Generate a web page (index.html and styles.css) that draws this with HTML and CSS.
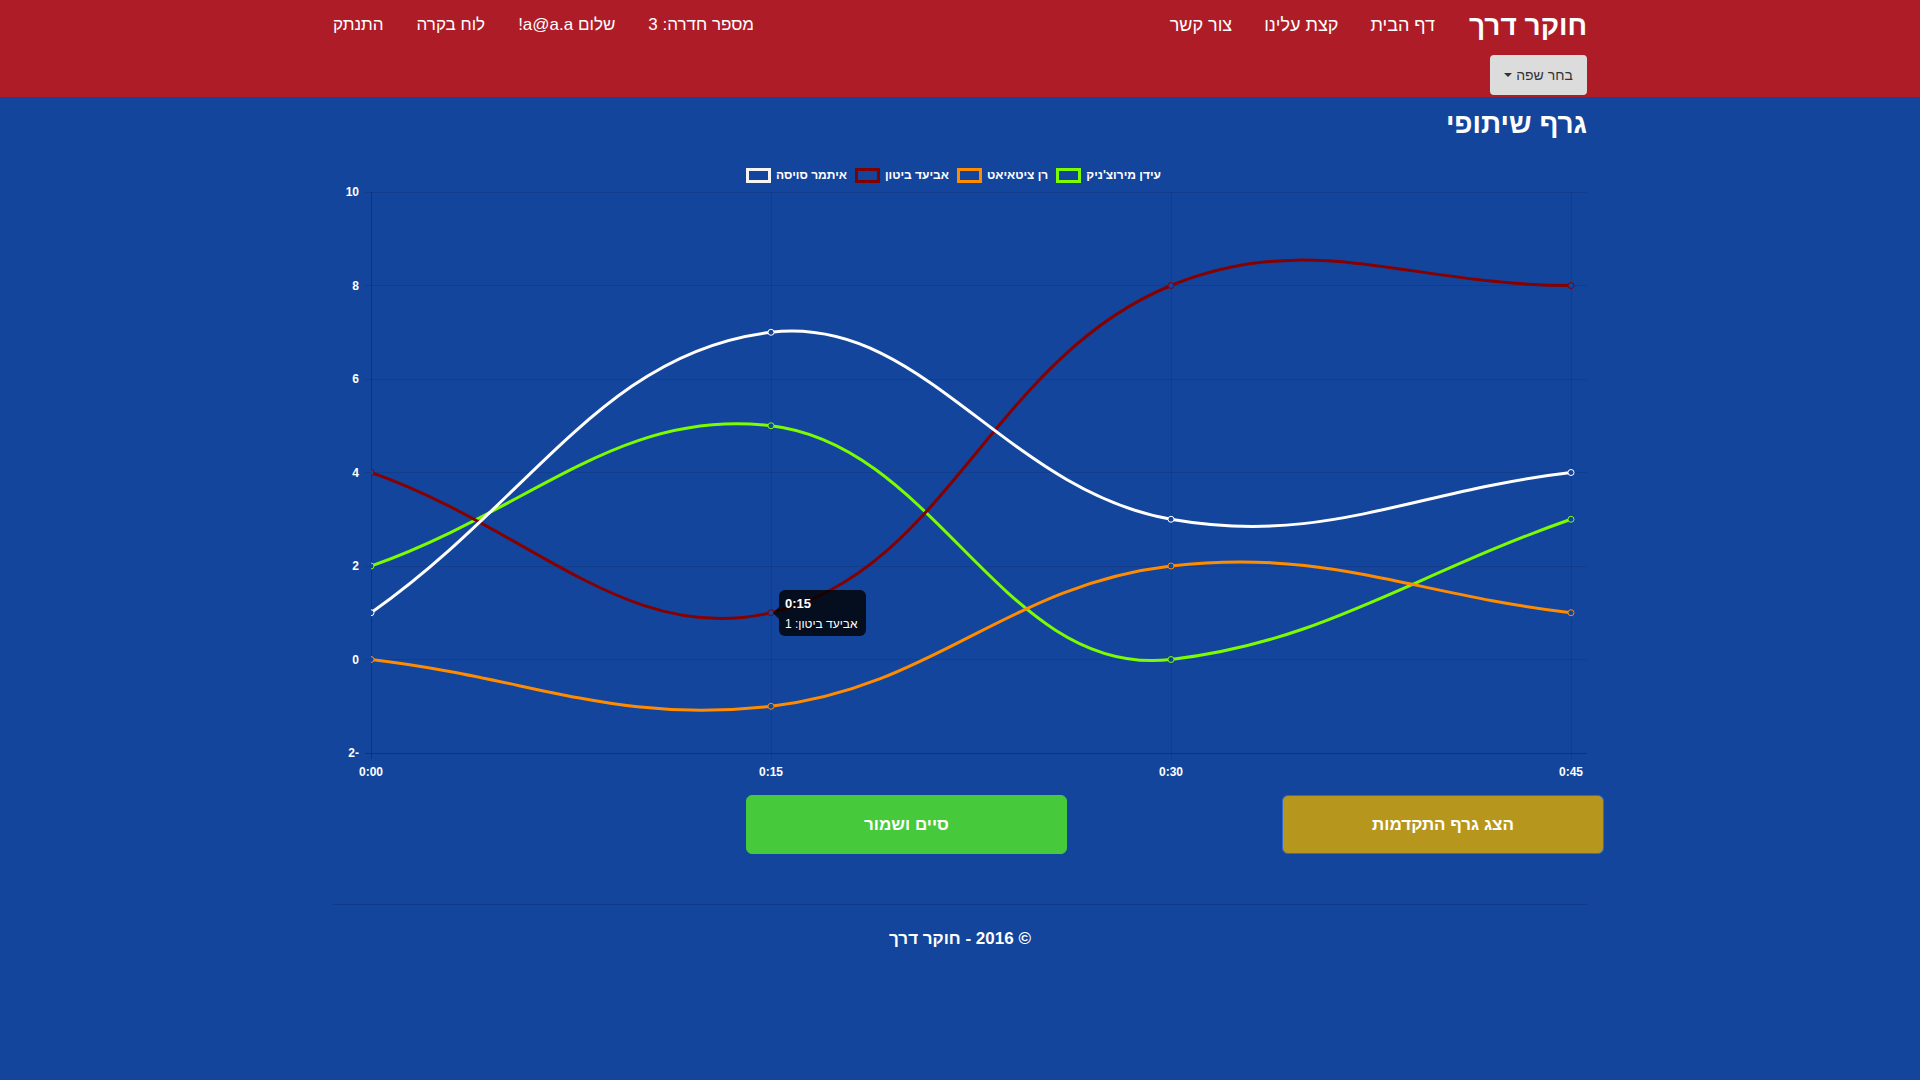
FILE: index.html
```html
<!DOCTYPE html>
<html lang="he" dir="rtl">
<head>
<meta charset="utf-8">
<title>גרף שיתופי</title>
<link rel="stylesheet" href="styles.css">
</head>
<body>
<header class="navbar">
  <div class="container">
    <div class="nav-top">
      <nav class="nav-main">
        <a class="brand">חוקר דרך</a>
        <a class="nav-link">דף הבית</a>
        <a class="nav-link">קצת עלינו</a>
        <a class="nav-link">צור קשר</a>
      </nav>
      <nav class="nav-user">
        <span class="nav-link">מספר חדרה: 3</span>
        <a class="nav-link">שלום a@a.a!</a>
        <a class="nav-link">לוח בקרה</a>
        <a class="nav-link">התנתק</a>
      </nav>
    </div>
    <div class="nav-bottom">
      <button class="lang-btn">בחר שפה <span class="caret"></span></button>
    </div>
  </div>
</header>

<main class="container">
  <h1 class="page-title">גרף שיתופי</h1>

  <div class="legend">
    <div class="legend-item"><span class="legend-box box-white"></span><span class="legend-text">איתמר סויסה</span></div>
    <div class="legend-item"><span class="legend-box box-red"></span><span class="legend-text">אביעד ביטון</span></div>
    <div class="legend-item"><span class="legend-box box-orange"></span><span class="legend-text">רן ציטאיאט</span></div>
    <div class="legend-item"><span class="legend-box box-green"></span><span class="legend-text">עידן מירוצ'ניק</span></div>
  </div>

  <div class="chart">
    <svg class="chart-svg" width="1254" height="600" viewBox="333 185 1254 600" xmlns="http://www.w3.org/2000/svg">
      <defs>
        <clipPath id="area"><rect x="371" y="150" width="1240" height="640"/></clipPath>
      </defs>
      <g class="grid">
        <line x1="365" y1="192.5" x2="1587" y2="192.5"/>
        <line x1="365" y1="285.5" x2="1587" y2="285.5"/>
        <line x1="365" y1="379.5" x2="1587" y2="379.5"/>
        <line x1="365" y1="472.5" x2="1587" y2="472.5"/>
        <line x1="365" y1="566.5" x2="1587" y2="566.5"/>
        <line x1="365" y1="659.5" x2="1587" y2="659.5"/>
        <line x1="771.5" y1="192" x2="771.5" y2="759"/>
        <line x1="1171.5" y1="192" x2="1171.5" y2="759"/>
        <line x1="1571.5" y1="192" x2="1571.5" y2="759"/>
      </g>
      <g class="axis">
        <line x1="371.5" y1="192" x2="371.5" y2="759"/>
        <line x1="365" y1="753.5" x2="1587" y2="753.5"/>
      </g>
      <g class="ticks-y">
        <text x="359" y="196">10</text>
        <text x="359" y="289.5">8</text>
        <text x="359" y="383">6</text>
        <text x="359" y="476.5">4</text>
        <text x="359" y="570">2</text>
        <text x="359" y="663.5">0</text>
        <text x="359" y="757">&#x200F;-2</text>
      </g>
      <g class="ticks-x">
        <text x="371" y="776">0:00</text>
        <text x="771" y="776">0:15</text>
        <text x="1171" y="776">0:30</text>
        <text x="1571" y="776">0:45</text>
      </g>
      <g clip-path="url(#area)" class="series">
        <path class="s-green" d="M371,566 C531,509.9 618.1,407.9 771,425.75 C938.1,445.3 1003.9,679 1171,659.5 C1323.9,641.6 1411,575.35 1571,519.25"/>
        <g class="pts pts-green"><circle cx="371" cy="566" r="3"/><circle cx="771" cy="425.75" r="3"/><circle cx="1171" cy="659.5" r="3"/><circle cx="1571" cy="519.25" r="3"/></g>
        <path class="s-orange" d="M371,659.5 C531,678.2 615.1,724.5 771,706.25 C935.1,687.05 1006.9,585.2 1171,566 C1326.9,547.8 1411,594.05 1571,612.75"/>
        <g class="pts pts-orange"><circle cx="371" cy="659.5" r="3"/><circle cx="771" cy="706.25" r="3"/><circle cx="1171" cy="566" r="3"/><circle cx="1571" cy="612.75" r="3"/></g>
        <path class="s-red" d="M371,472.5 C531,528.6 626.8,646.4 771,612.75 C946.8,571.65 990.6,359.3 1171,285.5 C1310.6,228.4 1411,285.5 1571,285.5"/>
        <g class="pts pts-red"><circle cx="371" cy="472.5" r="3"/><circle cx="771" cy="612.75" r="3"/><circle cx="1171" cy="285.5" r="3"/><circle cx="1571" cy="285.5" r="3"/></g>
        <path class="s-white" d="M371,612.75 C531,500.55 602.9,351.9 771,332.25 C922.9,314.5 1003.6,489.9 1171,519.25 C1323.6,546 1411,491.2 1571,472.5"/>
        <g class="pts pts-white"><circle cx="371" cy="612.75" r="3"/><circle cx="771" cy="332.25" r="3"/><circle cx="1171" cy="519.25" r="3"/><circle cx="1571" cy="472.5" r="3"/></g>
      </g>
      <polygon class="tip-caret" points="773,613 779,607 779,619"/>
    </svg>
    <div class="tooltip">
      <div class="tip-title">0:15</div>
      <div class="tip-body">אביעד ביטון: 1</div>
    </div>
  </div>

  <div class="actions">
    <button class="btn btn-gold">הצג גרף התקדמות</button>
    <button class="btn btn-green">סיים ושמור</button>
  </div>

  <hr class="divider">
  <footer class="footer">© 2016 - חוקר דרך</footer>
</main>
</body>
</html>
```
FILE: styles.css
```css
* { box-sizing: border-box; }

html, body {
  margin: 0;
  padding: 0;
}

body {
  background: #14459c;
  color: #fff;
  font-family: "Liberation Sans", Arial, "DejaVu Sans", sans-serif;
  min-height: 1080px;
}

.container {
  width: 1254px;
  margin: 0 auto;
}

/* Header */
.navbar {
  background: #ae1c28;
  height: 97px;
}

.nav-top {
  display: flex;
  justify-content: space-between;
  align-items: center;
  height: 50px;
}

.nav-main,
.nav-user {
  display: flex;
  align-items: center;
  gap: 33px;
}

.nav-main {
  gap: 32px;
}

.nav-main a,
.nav-user a,
.nav-user span {
  color: #fff;
  text-decoration: none;
}

.brand {
  font-size: 28px;
  font-weight: bold;
  padding-top: 2px;
  margin-left: 2px;
}

.nav-link {
  font-size: 17px;
}

.nav-main .nav-link {
  font-size: 18px;
}

.nav-bottom {
  display: flex;
  margin-top: 5px;
}

.lang-btn {
  width: 97px;
  height: 40px;
  background: #dcdcdc;
  border: 0;
  border-radius: 4px;
  color: #333;
  font-family: inherit;
  font-size: 14px;
  padding: 0;
  display: flex;
  align-items: center;
  justify-content: center;
  gap: 4px;
}

.caret {
  display: inline-block;
  width: 0;
  height: 0;
  border-top: 4px solid #333;
  border-left: 4px solid transparent;
  border-right: 4px solid transparent;
}

/* Title */
.page-title {
  margin: 11px 0 0;
  font-size: 28px;
  line-height: 32px;
  font-weight: bold;
}

/* Legend */
.legend {
  direction: ltr;
  display: flex;
  justify-content: center;
  gap: 8px;
  margin-top: 27px;
  height: 16px;
  padding-right: 13px;
}

.legend-item {
  display: flex;
  align-items: center;
  gap: 5px;
}

.legend-box {
  width: 25px;
  height: 15px;
  border: 3px solid #fff;
  background: #14459c;
}

.box-white { border-color: #f4f4f4; }
.box-red { border-color: #7e0000; }
.box-orange { border-color: #ff8c00; }
.box-green { border-color: #7cfc00; }

.legend-text {
  direction: rtl;
  font-size: 12px;
  font-weight: bold;
  color: #fff;
}

/* Chart */
.chart {
  position: relative;
  width: 1254px;
  height: 600px;
  margin-top: 2px;
}

.chart-svg {
  display: block;
  direction: ltr;
}

.grid line {
  stroke: rgba(0, 0, 0, 0.1);
  stroke-width: 1;
}

.axis line {
  stroke: rgba(0, 0, 0, 0.25);
  stroke-width: 1;
}

.ticks-y text {
  fill: #fff;
  font-family: "Liberation Sans", Arial, sans-serif;
  font-size: 12px;
  font-weight: bold;
  text-anchor: end;
}

.ticks-x text {
  fill: #fff;
  font-family: "Liberation Sans", Arial, sans-serif;
  font-size: 12px;
  font-weight: bold;
  text-anchor: middle;
}

.series path {
  fill: none;
  stroke-width: 3;
}

.s-white { stroke: #fff; }
.s-red { stroke: #850000; }
.s-orange { stroke: #ff8c00; }
.s-green { stroke: #7cfc00; }

.pts circle {
  fill: #14459c;
  stroke-width: 1;
}

.pts-white circle { stroke: #fff; }
.pts-red circle { stroke: #850000; }
.pts-orange circle { stroke: #ff8c00; }
.pts-green circle { stroke: #7cfc00; }

.tip-caret {
  fill: rgba(0, 0, 0, 0.8);
}

.tooltip {
  position: absolute;
  left: 446px;
  top: 405px;
  width: 87px;
  height: 46px;
  background: rgba(0, 0, 0, 0.8);
  border-radius: 6px;
  padding: 6px 6px 0;
  direction: ltr;
  text-align: left;
  font-family: "Liberation Sans", Arial, sans-serif;
}

.tip-title {
  font-size: 13px;
  font-weight: bold;
  line-height: 15px;
  color: #fff;
}

.tip-body {
  direction: rtl;
  text-align: left;
  font-size: 12px;
  line-height: 14px;
  margin-top: 6px;
  color: #fff;
}

/* Actions */
.actions {
  display: flex;
  gap: 215px;
  width: 1286px;
  margin: 10px -17px 0 0;
  margin-right: -17px;
  margin-left: -15px;
}

.btn {
  width: 321px;
  height: 59px;
  border-radius: 6px;
  color: #fff;
  font-family: inherit;
  font-size: 17px;
  font-weight: bold;
  cursor: pointer;
}

.btn-gold {
  width: 322px;
  background: #b7961d;
  border: 1px solid #2f6ad0;
}

.btn-green {
  background: #46c93a;
  border: 1px solid #46c93a;
}

/* Footer */
.divider {
  border: 0;
  border-top: 1px solid rgba(0, 0, 0, 0.15);
  margin: 50px 0 0;
  height: 0;
}

.footer {
  text-align: center;
  font-size: 17px;
  font-weight: bold;
  line-height: 20px;
  margin-top: 24px;
}
```
